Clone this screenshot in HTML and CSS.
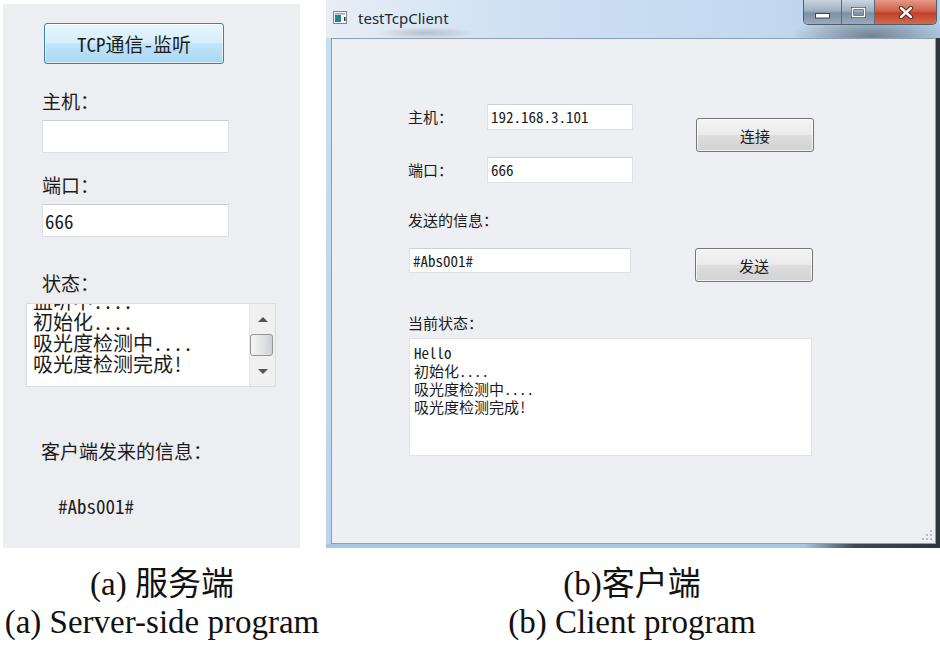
FILE: index.html
```html
<!DOCTYPE html>
<html lang="zh-CN">
<head>
    <meta charset="UTF-8">
    <title>TCP 通信 - 服务端与客户端</title>
    <link rel="stylesheet" href="styles.css">
</head>
<body>
    <div class="panels">
        <!-- (a) server side -->
        <div class="server">
            <button class="listen-btn">TCP通信-监听</button>
            <div class="s-label host-label">主机：</div>
            <div class="s-edit"></div>
            <div class="s-label port-label">端口：</div>
            <div class="s-edit">666</div>
            <div class="s-label state-label">状态：</div>
            <div class="listbox">
                <div class="list-view">
                    <div class="partial"><div>监听中....</div></div>
                    <div>初始化....</div>
                    <div>吸光度检测中....</div>
                    <div>吸光度检测完成!</div>
                </div>
                <div class="vscroll">
                    <div class="arrow-btn"><span class="tri-up"></span></div>
                    <div class="thumb"></div>
                    <div class="arrow-btn"><span class="tri-down"></span></div>
                </div>
            </div>
            <div class="s-label recv-label">客户端发来的信息：</div>
            <div class="recv-text">#Abs001#</div>
        </div>

        <!-- (b) client window -->
        <div class="window">
            <div class="titlebar">
                <svg class="app-icon" width="15" height="14" viewBox="0 0 15 14">
                    <rect x="0.5" y="0.5" width="13" height="12" fill="#f4f6f8" stroke="#7a8794"/>
                    <rect x="2" y="4" width="6" height="7" fill="#2f7f86"/>
                    <rect x="2" y="2" width="10" height="1.5" fill="#9aa6b2"/>
                    <rect x="11" y="6" width="1.5" height="4" fill="#333"/>
                </svg>
                <span class="title">testTcpClient</span>
                <div class="caption-btns">
                    <div class="cbtn min">
                        <svg width="15" height="6" viewBox="0 0 15 6"><rect x="0.5" y="0.5" width="14" height="4.5" fill="#fff" stroke="#3a4652"/></svg>
                    </div>
                    <div class="cbtn max">
                        <svg width="15" height="11" viewBox="0 0 15 11"><rect x="1.5" y="1.5" width="12" height="8" fill="none" stroke="#3a4652" stroke-width="3"/><rect x="1.5" y="1.5" width="12" height="8" fill="none" stroke="#fff" stroke-width="1.6"/></svg>
                    </div>
                    <div class="cbtn close">
                        <svg width="16" height="13" viewBox="0 0 16 13"><path d="M3 2 L13 11 M13 2 L3 11" stroke="#5a2a22" stroke-width="4.4" stroke-linecap="round"/><path d="M3 2 L13 11 M13 2 L3 11" stroke="#fff" stroke-width="2.4" stroke-linecap="round"/></svg>
                    </div>
                </div>
            </div>
            <div class="client">
                <div class="conn-block">
                    <div class="conn-grid">
                        <div class="c-label">主机：</div>
                        <div class="c-edit">192.168.3.101</div>
                        <div class="c-label">端口：</div>
                        <div class="c-edit">666</div>
                    </div>
                    <button class="c-btn connect-btn">连接</button>
                </div>
                <div class="c-label send-label">发送的信息：</div>
                <div class="send-row">
                    <div class="c-edit send-edit">#Abs001#</div>
                    <button class="c-btn send-btn">发送</button>
                </div>
                <div class="c-label status-label">当前状态：</div>
                <div class="status-box">
                    <div>Hello</div>
                    <div>初始化....</div>
                    <div>吸光度检测中....</div>
                    <div>吸光度检测完成!</div>
                </div>
                <svg class="grip" width="12" height="12" viewBox="0 0 12 12">
                    <g fill="#b5bcc6">
                        <rect x="9" y="1" width="2" height="2"/>
                        <rect x="5" y="5" width="2" height="2"/><rect x="9" y="5" width="2" height="2"/>
                        <rect x="1" y="9" width="2" height="2"/><rect x="5" y="9" width="2" height="2"/><rect x="9" y="9" width="2" height="2"/>
                    </g>
                </svg>
            </div>
        </div>
    </div>

    <div class="captions">
        <div class="cap">
            <div>(a) 服务端</div>
            <div>(a) Server-side program</div>
        </div>
        <div class="cap">
            <div>(b)客户端</div>
            <div>(b) Client program</div>
        </div>
    </div>
</body>
</html>
```

FILE: styles.css
```css
/* Colours */
:root {
    --panel-bg: #eceef2;
    --text: #1c1c1c;
    --edit-border: #dde1e7;
    --ui-font: "Noto Sans Mono CJK SC", "Noto Sans CJK SC", sans-serif;
}

* {
    margin: 0;
    padding: 0;
    box-sizing: border-box;
}

body {
    width: 940px;
    height: 648px;
    overflow: hidden;
    background: #fff;
    color: var(--text);
    font-family: var(--ui-font);
}

.panels {
    display: flex;
    align-items: flex-start;
    padding-left: 3px;
}

/* ---------- (a) server panel ---------- */
.server {
    width: 297px;
    height: 544px;
    margin-top: 4px;
    padding-left: 39px;
    background: var(--panel-bg);
    display: flex;
    flex-direction: column;
    align-items: flex-start;
}

.listen-btn {
    margin-top: 19px;
    margin-left: 2px;
    width: 180px;
    height: 41px;
    border: 1px solid #3c7fb1;
    border-radius: 3px;
    background: linear-gradient(#e9f5fc, #d6eefb 48%, #bfe4f9 52%, #a9d8f4);
    box-shadow: inset 0 0 0 1px rgba(255, 255, 255, 0.6);
    font-family: var(--ui-font);
    font-size: 19px;
    color: var(--text);
}

.s-label {
    font-size: 19px;
    line-height: 24px;
}

.host-label { margin-top: 25px; }
.port-label { margin-top: 20px; }
.state-label { margin-top: 34px; }

.s-edit {
    width: 187px;
    height: 33px;
    margin-top: 7px;
    padding: 2px 0 0 2px;
    background: #fff;
    border: 1px solid var(--edit-border);
    border-top-color: #c9cdd4;
    font-size: 19px;
    line-height: 28px;
}

.listbox {
    display: flex;
    width: 250px;
    height: 84px;
    margin-top: 8px;
    margin-left: -16px;
    background: #fff;
    border: 1px solid #d9dce2;
}

.list-view {
    flex: 1;
    overflow: hidden;
    padding-left: 6px;
    font-size: 20px;
    line-height: 21px;
}

/* last line of the log that is scrolled half out of view */
.partial {
    height: 7px;
    overflow: hidden;
    display: flex;
    align-items: flex-end;
}

.partial div {
    flex: none;
    height: 21px;
}

.vscroll {
    width: 26px;
    display: flex;
    flex-direction: column;
    background: #f0f0f0;
    border-left: 1px solid #e6e6e6;
}

.arrow-btn {
    flex: 1;
    display: flex;
    align-items: center;
    justify-content: center;
}

.tri-up,
.tri-down {
    width: 0;
    height: 0;
    border-left: 5px solid transparent;
    border-right: 5px solid transparent;
}

.tri-up { border-bottom: 5px solid #555; }
.tri-down { border-top: 5px solid #555; }

.thumb {
    height: 22px;
    margin: 0 2px 0 0;
    border: 1px solid #959595;
    border-radius: 3px;
    background: linear-gradient(90deg, #f4f4f4, #e3e4e7 55%, #cdd0d5);
}

.recv-label {
    margin-top: 52px;
    margin-left: -1px;
}

.recv-text {
    margin-top: 33px;
    margin-left: 16px;
    font-size: 19px;
    line-height: 20px;
}

/* ---------- (b) client window ---------- */
.window {
    width: 614px;
    height: 548px;
    margin-left: 26px;
    padding: 0 4px 4px 5px;
    display: flex;
    flex-direction: column;
    background:
        linear-gradient(90deg, #a8c5e2 0, #a8c5e2 78%, #3d4953 86%, #2c363e) bottom / 100% 4px no-repeat,
        linear-gradient(90deg, transparent 0, transparent 99%, #2e3840 99.4%) right / 100% 100% no-repeat,
        linear-gradient(#e3edf7, #c9ddf1 38px, #bcd3eb);
}

.titlebar {
    height: 38px;
    margin: 0 -4px 0 -5px;
    padding-left: 7px;
    display: flex;
    align-items: center;
    background:
        radial-gradient(ellipse 50px 6px at 100px 33px, rgba(90, 100, 110, 0.3), transparent),
        radial-gradient(ellipse 80px 20px at 545px 36px, rgba(40, 50, 60, 0.5), transparent),
        linear-gradient(90deg, #e8eef5, #cfe1f3 30%, #c3d9ef 70%, #b4cde6);
}

.app-icon {
    margin-top: -2px;
}

.title {
    margin-left: 10px;
    margin-top: -2px;
    font-family: "Noto Sans", sans-serif;
    font-size: 15px;
    color: #1b2a3a;
}

.caption-btns {
    align-self: flex-start;
    margin-left: auto;
    margin-right: 3px;
    display: flex;
    height: 25px;
    border: 1px solid #4f5d6b;
    border-top: none;
    border-radius: 0 0 5px 5px;
    overflow: hidden;
}

.cbtn {
    display: flex;
    align-items: center;
    justify-content: center;
    height: 100%;
}

.cbtn.min {
    width: 38px;
    padding-top: 7px;
    border-right: 1px solid #5b6a78;
    background: linear-gradient(#c9d5e1, #9eb0c2 45%, #7d90a4 55%, #98aabc);
}

.cbtn.max {
    width: 33px;
    border-right: 1px solid #5b6a78;
    background: linear-gradient(#c9d5e1, #9eb0c2 45%, #7d90a4 55%, #98aabc);
}

.cbtn.close {
    width: 61px;
    background: linear-gradient(#e49a87, #d0614a 45%, #c0412a 55%, #d36a50);
}

.client {
    flex: 1;
    position: relative;
    padding: 65px 0 0 76px;
    background: #eeeff3;
    border: 1px solid #8c9eb2;
    font-size: 15px;
    color: #1a1a1a;
}

.conn-block {
    display: flex;
    align-items: flex-start;
}

.conn-grid {
    display: grid;
    grid-template-columns: 79px 146px;
    grid-auto-rows: 26px;
    row-gap: 27px;
    align-items: center;
}

.c-label {
    line-height: 20px;
}

.c-edit {
    height: 26px;
    padding-left: 3px;
    background: #fff;
    border: 1px solid var(--edit-border);
    border-top-color: #cdd1d8;
    line-height: 24px;
    font-size: 15px;
}

.c-btn {
    width: 118px;
    height: 34px;
    border: 1px solid #767676;
    border-radius: 3px;
    background: linear-gradient(#f4f4f4, #ebebeb 48%, #dddddd 52%, #d2d2d2);
    box-shadow: inset 0 0 0 1px rgba(255, 255, 255, 0.7);
    font-family: var(--ui-font);
    font-size: 15px;
    color: #1a1a1a;
}

.connect-btn {
    margin-left: 63px;
    margin-top: 14px;
}

.send-label {
    margin-top: 27px;
}

.send-row {
    display: flex;
    align-items: flex-start;
    margin-top: 18px;
    margin-left: 1px;
}

.send-edit {
    width: 222px;
    height: 25px;
    line-height: 23px;
}

.send-btn {
    margin-left: 64px;
}

.status-label {
    margin-top: 31px;
}

.status-box {
    width: 403px;
    height: 118px;
    margin-top: 5px;
    margin-left: 1px;
    padding: 5px 0 0 4px;
    background: #fff;
    border: 1px solid #dfe2e7;
    line-height: 18px;
}

/* resize grip sits over the corner */
.grip {
    position: absolute;
    right: 2px;
    bottom: 2px;
}

/* ---------- captions ---------- */
.captions {
    display: grid;
    grid-template-columns: 324px 1fr;
    margin-top: 17px;
    font-family: "Liberation Serif", "Noto Sans CJK SC", serif;
    font-size: 33px;
    line-height: 38px;
    color: #111;
}

.cap {
    text-align: center;
}
```
